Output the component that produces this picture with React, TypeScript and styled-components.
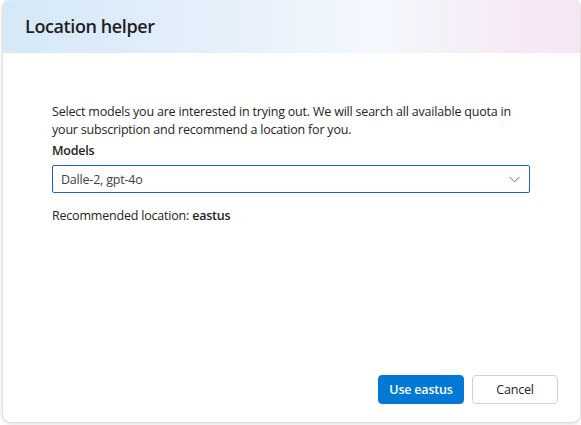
import React from "react";
import styled, { createGlobalStyle } from "styled-components";

const GlobalStyle = createGlobalStyle`
  html, body {
    margin: 0;
    padding: 0;
    background: #ffffff;
    font-family: "Open Sans", "Noto Sans", "Liberation Sans", sans-serif;
    color: #242424;
  }
`;

const Page = styled.div`
  width: 581px;
  height: 425px;
  padding: 0 1px 3px 3px;
  box-sizing: border-box;
  overflow: hidden;
`;

const Dialog = styled.section`
  width: 577px;
  height: 422px;
  background: #ffffff;
  border-radius: 8px;
  box-shadow: 0 0 3px rgba(0, 0, 0, 0.18), 0 2px 6px rgba(0, 0, 0, 0.12);
  display: flex;
  flex-direction: column;
  overflow: hidden;
`;

const Header = styled.header`
  height: 53px;
  flex: none;
  display: flex;
  align-items: center;
  padding: 0 22px;
  background: linear-gradient(90deg, #d5e8f8 0%, #e6f0fb 40%, #f3f8fd 65%, #f6eaf5 88%, #f7e5f3 100%);
`;

const Title = styled.h2`
  margin: 0 0 2px;
  font-size: 18px;
  font-weight: 600;
  letter-spacing: -0.4px;
  color: #1f1f1f;
`;

const Body = styled.div`
  flex: 1;
  padding: 50px 50px 0 49px;
  display: flex;
  flex-direction: column;
  font-size: 12.5px;
  letter-spacing: -0.2px;
`;

const Description = styled.p`
  margin: 0;
  line-height: 18px;
`;

const FieldLabel = styled.label`
  display: block;
  margin-top: 3px;
  font-weight: 600;
  line-height: 18px;
`;

const Dropdown = styled.div`
  margin-top: 5px;
  height: 28px;
  box-sizing: border-box;
  border: 1px solid #1a63d3;
  border-radius: 2px;
  display: flex;
  align-items: center;
  justify-content: space-between;
  padding: 0 9px 0 8px;
  color: #424242;
`;

const Recommendation = styled.div`
  margin-top: 14px;
  line-height: 18px;
  b {
    font-weight: 600;
  }
`;

const Footer = styled.footer`
  display: flex;
  justify-content: flex-end;
  gap: 8px;
  padding: 0 22px 18px;
`;

const Button = styled.button<{ primary?: boolean }>`
  width: 86px;
  height: 29px;
  border-radius: 4px;
  font-family: inherit;
  font-size: 12.5px;
  letter-spacing: -0.2px;
  cursor: pointer;
  border: 1px solid ${({ primary }) => (primary ? "#0078d4" : "#d1d1d1")};
  background: ${({ primary }) => (primary ? "#0078d4" : "#ffffff")};
  color: ${({ primary }) => (primary ? "#ffffff" : "#242424")};
  font-weight: ${({ primary }) => (primary ? 600 : 400)};
`;

function Chevron() {
  return (
    <svg width="11" height="7" viewBox="0 0 11 7" fill="none">
      <path d="M0.5 0.8 L5.5 5.8 L10.5 0.8" stroke="#707070" strokeWidth="1" />
    </svg>
  );
}

export default function App() {
  return (
    <>
      <GlobalStyle />
      <Page>
        <Dialog>
          <Header>
            <Title>Location helper</Title>
          </Header>
          <Body>
            <Description>
              Select models you are interested in trying out. We will search all available quota in
              your subscription and recommend a location for you.
            </Description>
            <FieldLabel>Models</FieldLabel>
            <Dropdown>
              <span>Dalle-2, gpt-4o</span>
              <Chevron />
            </Dropdown>
            <Recommendation>
              Recommended location: <b>eastus</b>
            </Recommendation>
          </Body>
          <Footer>
            <Button primary>Use eastus</Button>
            <Button>Cancel</Button>
          </Footer>
        </Dialog>
      </Page>
    </>
  );
}
